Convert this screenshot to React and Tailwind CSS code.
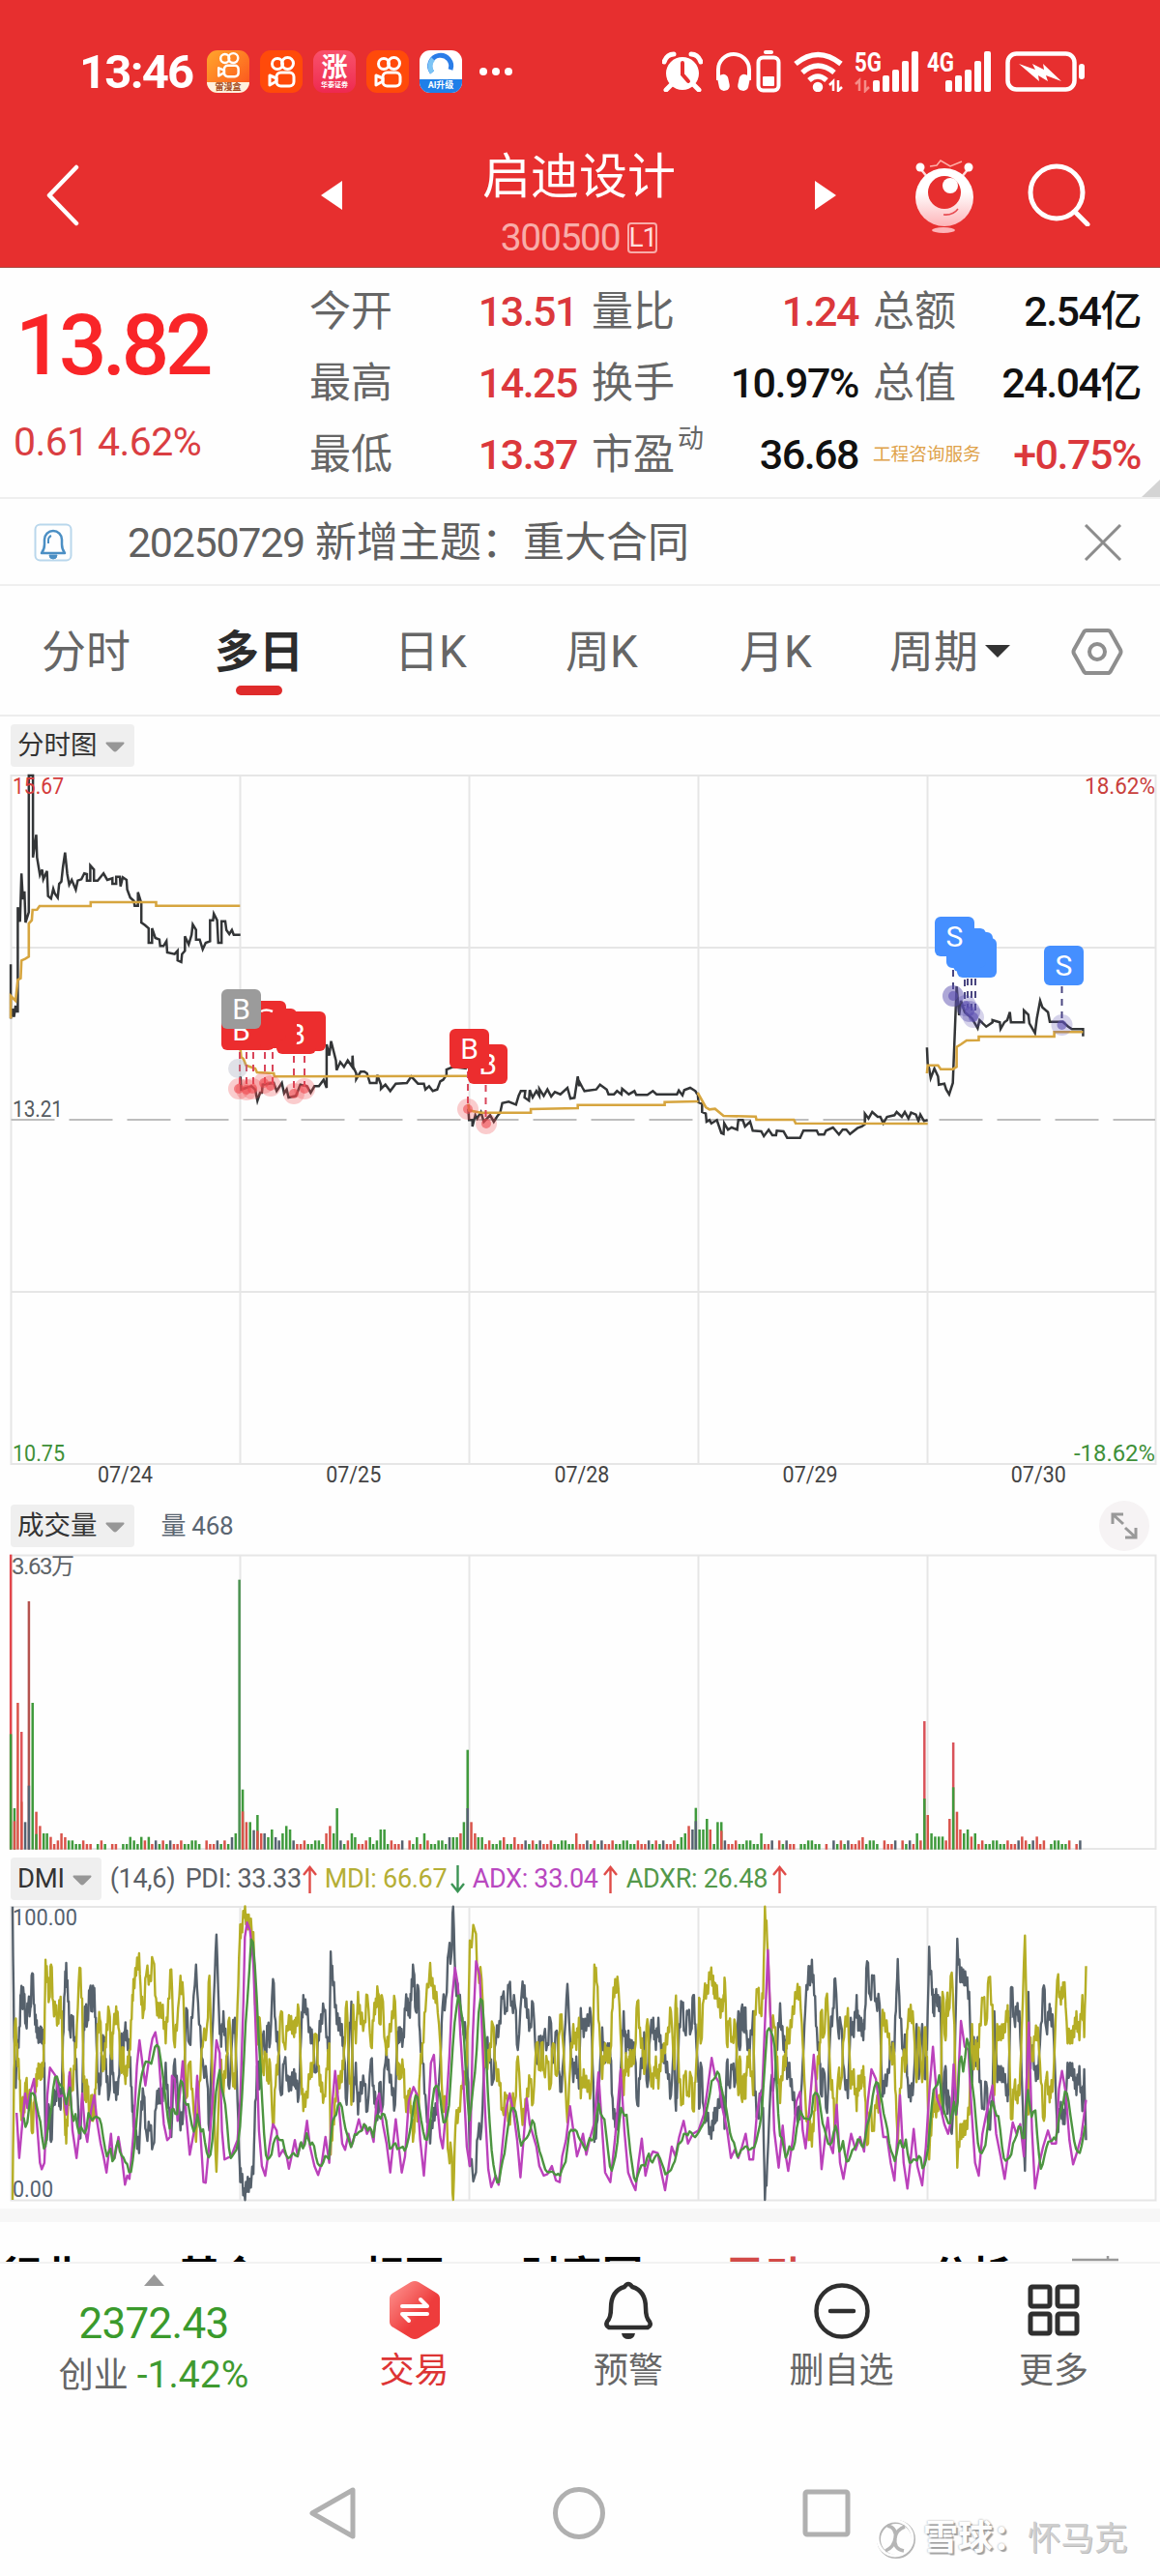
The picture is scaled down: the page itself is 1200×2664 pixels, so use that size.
const quotes = [
  { label: '今开', value: '13.51', red: true },
  { label: '量比', value: '1.24', red: true },
  { label: '总额', value: '2.54亿' },
  { label: '最高', value: '14.25', red: true },
  { label: '换手', value: '10.97%' },
  { label: '总值', value: '24.04亿' },
  { label: '最低', value: '13.37', red: true },
  { label: '市盈', sup: '动', value: '36.68' },
  { label: '工程咨询服务', tag: true, value: '+0.75%', red: true },
];

// Series points are stored in sample units: 2.6133 per px across, 3 per px down
const SX = 1 / 2.6133;
const HALF = 1568;

const parse = (text, dx = 0) =>
  text.trim().split(/\s+/).map((pair) => {
    const [x, y] = pair.split(',').map(Number);
    return [x + dx, y];
  });

const toPoints = (list, top) =>
  list.map(([x, y]) => `${(x * SX).toFixed(1)},${(top + y / 3).toFixed(1)}`).join(' ');

const priceDays = [
  parse('29,652 29,820 34,790 38,815 42,780 42,798 48,798 48,475 54,520 58,370 62,450 66,425 69,522 78,490 78,66 89,66 89,320 98,250 100,320 108,375 114,358 117,388 127,362 130,440 138,448 144,418 148,432 156,445 160,402 166,395 170,350 176,305 182,372 187,405 194,390 205,420 210,392 220,388 228,370 235,372 235,392 244,392 244,345 254,358 254,392 264,392 280,370 290,390 304,385 304,402 314,402 314,380 324,380 326,410 332,382 342,390 344,420 352,445 362,455 364,470 373,470 373,428 382,462 382,522 392,530 402,540 402,585 411,585 411,540 420,570 431,575 433,595 442,595 450,580 452,615 472,620 480,610 480,640 490,645 492,620 500,610 500,565 510,590 518,560 521,528 530,545 530,575 540,575 548,605 556,585 568,580 568,515 576,515 578,495 587,515 590,585 599,585 599,518 609,518 612,545 620,558 627,545 632,560 650,560'),
  parse('650,1000 652,1040 680,1030 690,1040 696,1075 703,1050 708,1050 710,1025 740,1020 748,1045 762,1020 768,1052 775,1040 780,1065 800,1060 812,1025 830,1030 840,1050 850,1030 862,1030 875,1010 883,1035 883,900 890,935 895,890 908,950 910,980 920,955 930,970 940,950 952,970 953,935 955,970 963,990 963,1008 975,985 985,985 992,990 1000,1020 1018,1020 1020,995 1030,1025 1030,1038 1042,1025 1055,1045 1070,1022 1100,1020 1112,1000 1130,1022 1146,1022 1150,1040 1160,1030 1170,1045 1182,1040 1190,1015 1198,1010 1207,995 1207,978 1225,970 1262,975'),
  parse('1266,1100 1268,1135 1277,1135 1277,1155 1285,1120 1290,1130 1300,1110 1308,1140 1325,1120 1335,1140 1345,1122 1352,1112 1358,1082 1375,1078 1395,1087 1402,1060 1408,1045 1420,1045 1418,1065 1430,1075 1432,1042 1440,1065 1450,1045 1458,1060 1458,1038 1470,1060 1480,1040 1490,1062 1500,1048 1515,1055 1534,1035 1542,1068 1553,1066 1562,1000 1566,1030 1568,1020 1575,1035 1580,1045 1612,1040 1622,1025 1640,1040 1645,1055 1660,1055 1668,1045 1680,1055 1682,1038 1700,1055 1715,1045 1720,1057 1750,1057 1765,1045 1775,1055 1830,1055 1835,1043 1845,1058 1850,1042 1866,1035 1880,1045 1885,1055'),
  parse('318,1050 320,1080 330,1085 330,1110 340,1115 342,1140 350,1135 355,1145 370,1135 382,1175 388,1178 390,1145 400,1165 410,1158 425,1165 428,1135 440,1135 446,1155 460,1140 467,1168 490,1170 497,1185 510,1165 520,1182 530,1182 532,1168 550,1170 560,1190 595,1190 604,1168 640,1168 645,1180 660,1180 665,1168 684,1158 700,1180 710,1165 720,1165 730,1178 750,1160 762,1155 770,1148 770,1115 780,1130 790,1110 805,1125 812,1125 820,1145 830,1125 850,1120 856,1110 870,1125 878,1110 888,1130 895,1112 908,1118 915,1138 920,1118 930,1138 940,1135', HALF),
  parse('938,910 940,960 944,975 948,1005 958,975 968,1000 970,1025 985,1022 990,1040 998,1055 1008,1020 1018,720 1025,810 1030,765 1040,800 1060,820 1075,850 1080,825 1098,845 1115,832 1115,825 1135,832 1137,852 1147,832 1155,825 1162,800 1165,832 1200,832 1200,795 1212,808 1215,835 1230,865 1235,820 1244,765 1250,785 1265,800 1270,830 1305,830 1320,845 1330,853 1360,853 1360,875', HALF),
];

const averageDays = [
  parse('29,820 29,750 42,765 48,700 56,695 58,640 68,635 78,628 78,525 86,515 88,483 100,482 107,471 245,471 245,459 422,459 422,470 649,470'),
  parse('650,915 652,940 658,945 665,965 690,975 695,987 740,990 742,1000 1265,998'),
  parse('1266,1085 1268,1105 1300,1112 1435,1112 1435,1101 1562,1098 1562,1088 1797,1088 1797,1079 1888,1077'),
  parse('318,1050 340,1095 350,1102 365,1100 388,1122 475,1124 477,1134 578,1134 583,1145 940,1146', HALF),
  parse('938,990 940,965 968,965 975,977 1008,977 1018,970 1018,908 1030,900 1045,888 1078,887 1078,876 1282,876 1282,862 1360,862', HALF),
];

const pdi = [
  ...parse('34,155 38,560 41,710 46,640 52,530 57,425 60,450 64,425 70,520 76,465 82,470 87,362 93,460 98,545 102,530 108,575 112,530 116,580 120,640 123,900 128,830 133,780 138,885 144,770 150,730 156,720 162,760 167,740 170,560 175,420 179,330 184,450 189,540 195,510 202,560 208,700 215,875 222,780 226,520 231,480 236,510 243,412 248,470 253,408 259,500 264,700 270,715 276,600 282,560 288,700 295,740 301,600 306,670 314,755 320,690 327,560 332,620 337,550 343,540 350,620 356,715 361,840 368,850 376,920 382,760 388,740 395,850 405,850 414,895 422,780 430,720 440,760 448,640 455,780 463,870 470,650 478,680 488,850 496,780 503,470 512,580 520,500 530,335 538,520 548,630 560,700 566,850 572,620 578,440 585,242 592,480 598,590 604,480 612,600 620,720 628,560 635,500 642,760 648,960 652,1010 660,1030 667,1040 675,1000 685,985 690,760 697,640 702,720 710,560 718,600 724,530 730,580 738,380 745,510 752,600 760,740 768,640 778,680 787,725 795,660 800,720 808,740 814,560 820,430 828,490 838,530 845,580 853,670 862,570 868,490 876,480 885,560 890,640 894,295 900,400 908,460 915,540 924,520 930,620 937,770 943,600 950,450 955,760 962,640 968,800 975,700 985,710 993,790 1003,630 1010,710 1016,780 1022,795 1027,700 1032,790 1042,640 1050,630 1060,740 1068,770 1073,600 1078,530 1083,570 1090,560 1096,470 1102,440 1108,500 1113,380 1118,355 1124,480 1130,400 1135,540 1142,640 1150,740 1163,890 1172,780 1180,800 1190,640 1196,470 1205,440 1213,295 1220,310 1225,155 1231,380 1240,440 1250,500 1260,560 1266,700 1270,960 1284,990 1292,870 1302,840 1310,620 1318,560 1325,640 1332,700 1340,580 1350,510 1358,440 1368,470 1376,405 1384,450 1392,460 1400,600 1410,430 1418,400 1425,500 1433,520 1441,455 1450,640 1460,560 1465,640 1470,560 1480,580 1487,500 1495,640 1505,540 1513,680 1518,730 1526,560 1534,395 1541,560 1550,700 1558,620 1565,720'),
  ...parse('2,470 10,560 20,490 30,500 36,700 39,885 45,830 52,700 60,530 68,640 75,580 82,620 88,750 95,840 104,810 112,620 118,480 124,610 131,540 136,620 140,570 148,620 155,770 162,690 170,600 175,560 182,715 190,560 198,500 205,600 212,500 220,620 230,610 238,690 246,740 255,560 258,760 262,750 268,520 276,455 283,540 292,490 300,540 306,430 312,520 320,700 323,780 326,640 335,780 343,820 352,840 360,850 364,780 370,820 380,720 388,790 392,830 397,640 402,700 412,660 420,700 428,480 432,600 437,470 442,530 446,480 450,540 458,620 468,480 472,740 480,800 488,745 495,780 500,1065 506,960 515,720 525,690 533,600 541,455 550,600 556,570 560,690 566,640 575,755 585,780 594,815 602,640 609,480 618,340 622,400 627,320 633,430 640,530 648,640 652,740 658,660 668,795 676,560 684,470 690,378 698,540 705,520 714,660 724,750 732,500 740,560 748,430 752,540 760,500 766,570 770,480 776,325 784,430 792,380 800,440 810,460 816,700 822,735 832,660 842,600 848,620 854,480 859,318 865,500 874,600 880,570 886,690 894,760 902,690 910,520 916,690 925,520 932,690 938,600 944,280 952,430 956,470 960,450 968,430 975,480 980,800 988,650 992,780 996,740 1005,860 1012,700 1020,255 1028,390 1036,350 1044,400 1052,420 1060,700 1065,560 1070,650 1075,560 1080,700 1090,780 1098,700 1105,845 1115,760 1120,480 1128,700 1138,650 1146,700 1155,720 1158,740 1163,500 1166,405 1174,500 1180,490 1188,480 1194,680 1203,975 1212,420 1216,640 1222,600 1230,650 1238,690 1246,520 1254,400 1260,530 1268,500 1272,470 1280,540 1290,835 1298,800 1304,780 1310,830 1318,640 1328,680 1336,660 1342,740 1350,650 1358,790 1363,660 1368,880', HALF),
];

// Minute ticks between the samples swing a little around the trend
const pdiTicks = [];
pdi.forEach(([x, y], i) => {
  if (i > 0) {
    const [px, py] = pdi[i - 1];
    const swing = Math.abs(y - py) < 160 ? 46 : 14;
    const up = i % 2 ? 1 : -1;
    pdiTicks.push([px + (x - px) * 0.35, py + (y - py) * 0.35 + up * swing * 0.7]);
    pdiTicks.push([px + (x - px) * 0.68, py + (y - py) * 0.68 - up * swing * 0.6]);
  }
  pdiTicks.push([x, y]);
});

const mdiTicks = pdiTicks.map(([x, y]) => [x, 1220 - y]);

const adx = [
  ...parse('45,795 52,935 60,830 68,735 74,780 80,740 92,690 100,830 108,950 113,970 120,950 128,740 135,655 150,680 160,745 172,740 180,800 188,670 196,850 207,935 214,860 222,735 230,850 236,885 246,790 255,740 262,820 272,890 280,930 288,980 300,860 305,930 310,935 320,870 330,940 338,1018 344,990 350,1000 360,870 370,650 377,570 385,640 393,710 405,610 412,565 420,545 428,600 435,720 443,830 452,880 460,870 465,680 472,690 480,820 494,635 503,800 513,925 525,850 533,680 543,880 550,1010 556,1012 565,900 575,750 585,570 594,610 600,850 607,940 615,935 625,930 635,900 642,880 650,750 658,450 662,250 668,205 676,230 685,330 692,560 700,850 708,960 717,990 728,900 738,830 748,850 755,930 765,910 775,930 781,968 790,920 797,880 805,930 812,890 820,900 830,820 838,900 850,960 860,988 870,950 880,870 890,950 898,770 906,665 915,760 925,890 933,910 942,860 950,900 960,860 970,815 978,850 985,830 992,860 1000,840 1010,885 1018,760 1025,735 1035,830 1045,890 1055,980 1062,900 1070,815 1078,900 1086,980 1095,930 1105,760 1118,715 1128,740 1136,880 1146,990 1155,850 1165,640 1173,615 1182,770 1190,870 1197,905 1205,800 1215,620 1222,440 1230,345 1238,400 1245,560 1255,740 1262,900 1270,960 1278,560 1287,325 1297,370 1305,600 1312,800 1320,970 1328,1025 1340,990 1348,1018 1358,900 1368,780 1378,735 1388,790 1398,880 1407,995 1416,870 1424,750 1432,830 1440,860 1450,900 1458,960 1470,990 1480,985 1492,960 1503,1005 1513,1010 1520,930 1530,880 1541,775 1550,850 1560,930'),
  ...parse('0,900 8,860 17,925 28,870 38,830 50,670 60,850 68,980 82,1010 95,870 110,660 120,850 130,980 140,1010 150,1035 158,950 167,875 177,990 187,940 197,915 210,920 220,980 230,1035 240,960 248,900 258,930 268,870 280,820 292,890 305,860 320,850 335,800 345,720 356,625 365,680 375,700 385,780 398,850 408,935 418,910 428,935 438,900 448,860 458,940 468,940 478,800 487,735 492,740 500,520 508,290 515,500 525,850 537,965 548,835 555,920 563,975 575,880 585,760 595,730 602,850 610,905 620,780 632,615 642,760 653,970 663,870 670,810 678,900 684,920 694,770 703,950 712,1000 722,930 733,860 745,910 757,870 768,915 778,760 788,660 800,690 810,780 820,870 830,870 840,950 850,1005 856,900 865,740 875,950 885,1030 893,950 902,845 912,960 925,1020 935,900 945,720 954,590 965,750 975,780 985,830 995,860 1003,820 1010,645 1018,800 1030,510 1040,590 1050,600 1058,780 1068,950 1078,990 1088,860 1100,790 1115,710 1125,860 1137,930 1148,1000 1160,900 1170,825 1180,860 1190,830 1200,930 1213,515 1222,850 1230,1030 1242,950 1252,900 1265,850 1275,890 1287,890 1295,720 1303,665 1313,730 1323,880 1333,955 1343,920 1355,870 1368,755', HALF),
];

const adxAt = (x) => {
  const i = adx.findIndex((p) => p[0] >= x);
  if (i <= 0) return adx[0][1];
  const [x0, y0] = adx[i - 1];
  const [x1, y1] = adx[i];
  return y0 + ((y1 - y0) * (x - x0)) / (x1 - x0);
};

// ADXR is the mean of the current ADX and the lagged one
const adxr = [];
for (let x = 64; x <= 2936; x += 5) adxr.push([x, (adxAt(x) + adxAt(x - 17)) / 2]);

const RED = '#d9534a';
const GREEN = '#3f9a3c';
const SLATE = '#566270';

// x -> [top, colour, inner top, inner colour]
const tallBars = {
  29: [383, '#e2474c', 940, GREEN], 39: [1170, GREEN, 1210, RED], 48: [843, RED], 58: [933, '#e0555a', 1150, RED], 68: [1213, SLATE],
  78: [528, '#b4524e', 1100, SLATE], 88: [843, GREEN], 98: [1181, RED, 1250, GREEN], 108: [1225, RED], 118: [1248, GREEN], 127: [1248, GREEN],
  137: [1259, RED], 166: [1248, RED], 176: [1260, RED], 352: [1259, GREEN], 382: [1259, GREEN], 402: [1259, GREEN],
  627: [1260, SLATE], 637: [1248, GREEN], 647: [461, '#4b9150'], 656: [1112, GREEN, 1180, RED], 666: [1213, RED], 676: [1213, GREEN],
  686: [1238, SLATE], 696: [1191, GREEN, 1240, RED], 706: [1248, RED], 715: [1248, SLATE], 725: [1260, GREEN], 735: [1236, GREEN], 745: [1260, SLATE],
  764: [1248, GREEN], 774: [1225, GREEN], 784: [1236, GREEN], 882: [1248, RED], 892: [1225, RED], 902: [1248, GREEN], 911: [1170, GREEN],
  951: [1248, GREEN], 960: [1260, GREEN], 1000: [1260, GREEN], 1029: [1236, GREEN], 1039: [1236, GREEN], 1127: [1260, GREEN], 1147: [1248, GREEN],
  1215: [1260, SLATE], 1225: [1260, GREEN], 1235: [1260, GREEN], 1245: [1248, RED], 1254: [1213, GREEN], 1264: [989, GREEN, 1170, SLATE],
  1274: [1213, RED], 1284: [1248, RED], 1293: [1260, GREEN], 1303: [1260, GREEN], 1362: [1260, RED], 1391: [1260, RED], 1558: [1248, RED],
  1842: [1260, GREEN], 1852: [1248, GREEN], 1862: [1225, RED], 1872: [1236, SLATE], 1881: [1169, GREEN, 1210, SLATE], 1891: [1236, GREEN],
  1901: [1236, GREEN], 1911: [1203, GREEN], 1920: [1236, RED], 1940: [1213, GREEN], 1950: [1213, GREEN, 1240, RED], 2058: [1248, GREEN],
  2332: [1260, RED], 2479: [1248, GREEN], 2499: [900, '#d9535a', 1140, GREEN], 2508: [1191, RED], 2518: [1248, GREEN], 2528: [1258, GREEN],
  2538: [1258, GREEN], 2548: [1258, GREEN], 2567: [1203, RED], 2577: [966, '#d9535a', 1105, GREEN], 2587: [1181, RED], 2596: [1236, RED],
  2606: [1248, GREEN], 2616: [1236, GREEN], 2626: [1258, RED], 2636: [1248, GREEN], 2763: [1258, RED], 2803: [1258, RED],
};

const bars = [];
const tallKeys = Object.keys(tallBars).map(Number);
const gaps = [254, 292, 323, 548, 1097, 2096, 2156, 2224, 2244, 2380, 2430, 2830, 2900];
for (let i = 0; i < 296; i++) {
  const x = 29 + i * 9.8;
  if (tallKeys.some((k) => Math.abs(k - x) < 5)) continue;
  if (gaps.some((g) => Math.abs(g - x) < 6)) continue;
  const r = (i * 7919 + i * i * 31) % 17;
  bars.push([x, r % 5 === 0 ? 1270 : 1281, [GREEN, RED, GREEN, SLATE, GREEN, RED, '#8a5a3c'][r % 7]]);
}
tallKeys.forEach((x) => {
  const [top, color, inner, innerColor] = tallBars[x];
  bars.push([x, top, color]);
  if (inner) bars.push([x, inner, innerColor]);
});

const Grid = ({ top, bottom, mid = [] }) => (
  <g stroke="#e6e6e6" strokeWidth="2" fill="none">
    <rect x="11.5" y={top} width="1184" height={bottom - top} />
    {[248.5, 485.5, 722.5, 959.5].map((x) => (
      <path key={x} d={`M${x} ${top}V${bottom}`} />
    ))}
    {mid.map((y) => (
      <path key={y} d={`M11.5 ${y}H1195.5`} />
    ))}
  </g>
);

const Flag = ({ x, y, color, children }) => (
  <g>
    <rect x={x} y={y} width="41" height="41" rx="6" fill={color} />
    <text x={x + 20.5} y={y + 31} fontSize="30" fill="#fff" textAnchor="middle">{children}</text>
  </g>
);

const PriceChart = () => (
  <svg className="block h-[746px] w-full" viewBox="0 800 1200 746">
    <Grid top={802} bottom={1514} mid={[980, 1336]} />
    <path d="M11.5 1158H1195" stroke="#bdbdbd" strokeWidth="2" strokeDasharray="45 15" />
    {priceDays.map((day, i) => (
      <polyline key={i} points={toPoints(day, 780)} fill="none" stroke="#333537" strokeWidth="2.5" />
    ))}
    {averageDays.map((day, i) => (
      <polyline key={i} points={toPoints(day, 780)} fill="none" stroke="#d6a53f" strokeWidth="2.6" />
    ))}

    {/* Buy points */}
    <g stroke="#d9455a" strokeWidth="2" strokeDasharray="7 6">
      <path d="M248 1075V1124M255 1088V1124M262 1088V1124M274 1088V1122M282 1088V1122M304 1092V1128M315 1092V1124M484 1108V1146M502.500 1122V1160" />
    </g>
    <g fill="#ef4a50">
      {[[247, 1126], [255, 1127], [261, 1126], [273, 1120], [280, 1123], [304, 1131], [315, 1126], [484, 1147], [503, 1162]].map(([x, y]) => (
        <g key={x}>
          <circle cx={x} cy={y} r="11" opacity="0.28" />
          <circle cx={x} cy={y} r="5" opacity="0.6" />
        </g>
      ))}
    </g>
    <circle cx="246" cy="1105" r="10" fill="#9aa0b4" opacity="0.3" />
    <Flag x={296} y={1046} color="#ec2d2e" />
    <Flag x={286} y={1049} color="#ec2d2e">B</Flag>
    <Flag x={266} y={1043} color="#ec2d2e" />
    <Flag x={255} y={1035} color="#ec2d2e" />
    <Flag x={243} y={1045} color="#ec2d2e" />
    <Flag x={229} y={1045} color="#ec2d2e">B</Flag>
    <path d="M270 1046q5-3 12 0" stroke="#fff" strokeWidth="2.5" fill="none" />
    <Flag x={229} y={1023} color="#9b9b9b">B</Flag>
    <Flag x={484} y={1080} color="#ec2d2e">B</Flag>
    <Flag x={465} y={1064} color="#ec2d2e">B</Flag>

    {/* Sell points */}
    <g stroke="#4a4680" strokeWidth="2" strokeDasharray="7 6">
      <path d="M986 990V1028M998 1000V1040M1001 1012V1042M1005 1012V1046M1009 1012V1048M1098.500 1020V1058" />
    </g>
    <g fill="#5b4fb0">
      {[[986, 1030, 0.5], [999, 1040, 0.3], [1003, 1046, 0.4], [1007, 1052, 0.25], [1098.5, 1060, 0.25]].map(([x, y, o]) => (
        <g key={x}>
          <circle cx={x} cy={y} r="11" opacity={o} />
          <circle cx={x} cy={y} r="5" opacity="0.6" />
        </g>
      ))}
    </g>
    <Flag x={990} y={970} color="#458fff" />
    <Flag x={986} y={964} color="#458fff" />
    <Flag x={979} y={960} color="#458fff" />
    <Flag x={967} y={948} color="#458fff">S</Flag>
    <Flag x={1080} y={978} color="#458fff">S</Flag>

    <g fontSize="23.500" fill="#555b61">
      <text x="13" y="821" fill="#d43c3c" textLength="53" lengthAdjust="spacingAndGlyphs">15.67</text>
      <text x="1122" y="821" fill="#c9403c" textLength="73" lengthAdjust="spacingAndGlyphs">18.62%</text>
      <text x="13" y="1155" textLength="52" lengthAdjust="spacingAndGlyphs">13.21</text>
      <text x="13" y="1511" fill="#3f9038" textLength="54" lengthAdjust="spacingAndGlyphs">10.75</text>
      <text x="1111" y="1511" fill="#3f9038" textLength="84" lengthAdjust="spacingAndGlyphs">-18.62%</text>
      {['07/24', '07/25', '07/28', '07/29', '07/30'].map((date, i) => (
        <text key={date} x={101 + i * 236.2} y="1533" fill="#444" textLength="57" lengthAdjust="spacingAndGlyphs">{date}</text>
      ))}
    </g>
  </svg>
);

const VolumeChart = () => (
  <svg className="block h-[310px] w-full" viewBox="0 1606 1200 310">
    <Grid top={1608.5} bottom={1912} />
    {bars.map(([x, top, color], i) => (
      <rect key={i} x={x * SX - 1.2} y={1480 + top / 3} width="2.5" height={(1298 - top) / 3} fill={color} />
    ))}
    <text x="12" y="1628" fontSize="24" fill="#606468" textLength="65">3.63万</text>
  </svg>
);

const DmiChart = () => (
  <svg className="block h-[314px] w-full" viewBox="0 1970 1200 314">
    <Grid top={1972} bottom={2275.5} />
    <g fill="none" strokeWidth="2.4" strokeLinejoin="round">
      <polyline points={toPoints(pdiTicks, 1920)} stroke="#56616c" />
      <polyline points={toPoints(mdiTicks, 1920)} stroke="#b5ae25" />
      <polyline points={toPoints(adx, 1920)} stroke="#bb41bb" />
      <polyline points={toPoints(adxr, 1920)} stroke="#4c9440" />
    </g>
    <text x="13" y="1991" fontSize="24" fill="#566270" textLength="67" lengthAdjust="spacingAndGlyphs">100.00</text>
    <text x="13" y="2272" fontSize="24" fill="#566270" textLength="42" lengthAdjust="spacingAndGlyphs">0.00</text>
  </svg>
);

const Drop = ({ className }) => (
  <svg className={className} viewBox="0 0 20 10">
    <path d="M1 0H19Q20 1 19 2L12 9Q10 11 8 9L1 2Q0 1 1 0Z" fill="currentColor" />
  </svg>
);

const Kuai = ({ className }) => (
  <svg className={className} viewBox="0 0 44 44" fill="none" stroke="#fff" strokeWidth="3">
    <circle cx="18" cy="14" r="5.500" />
    <circle cx="28.500" cy="13.500" r="6" />
    <rect x="17" y="23" width="18" height="14" rx="4.500" />
    <path d="M10 26l7 3v3l-7 4z" strokeLinejoin="round" />
  </svg>
);

const Signal = ({ label, faint }) => (
  <svg className="h-[44px] w-[66px]" viewBox="0 0 66 44">
    <text x="0" y="22" fontSize="27" fontWeight="700" fill="#fff" textLength="28" lengthAdjust="spacingAndGlyphs">{label}</text>
    {faint && <path d="M5 42V31l-4 4M11 31v11l4-4" stroke="#f58d88" strokeWidth="2.500" fill="none" />}
    <g fill="#fff">
      <rect x="19" y="31" width="7" height="12" rx="2" />
      <rect x="29" y="26" width="7" height="17" rx="2" />
      <rect x="39" y="20" width="7" height="23" rx="2" />
      <rect x="49" y="11" width="7" height="32" rx="2" />
      <rect x="59" y="1" width="7" height="42" rx="2" />
    </g>
  </svg>
);

const StatusBar = () => (
  <div className="flex h-[44px] items-center pl-[82px] text-white">
    <span className="w-[132px] text-[49px] leading-none font-bold tracking-[-1.800px]">13:46</span>
    <div className="flex gap-[11px]">
      <div className="relative h-[44px] w-[44px] overflow-hidden rounded-[11px] bg-gradient-to-br from-[#ffa52c] to-[#fa4a1c]">
        <Kuai className="absolute -top-1 left-1 h-[38px] w-[36px]" />
        <div className="absolute inset-x-0 bottom-0 h-[11px] bg-[#fff1de] text-center text-[9px] leading-[11px] font-bold text-[#a34a20]">雷漫盒</div>
      </div>
      <div className="h-[44px] w-[44px] rounded-[11px] bg-[#ff4a0a]"><Kuai className="h-[44px] w-[44px]" /></div>
      <div className="h-[44px] w-[44px] rounded-[11px] bg-gradient-to-b from-[#f9506b] to-[#ee2850] text-center font-bold">
        <div className="pt-1 text-[27px] leading-[28px]">涨</div>
        <div className="text-[7px] leading-[8px]">华泰证券</div>
      </div>
      <div className="h-[44px] w-[44px] rounded-[11px] bg-[#ff4a0a]"><Kuai className="h-[44px] w-[44px]" /></div>
      <div className="h-[44px] w-[44px] overflow-hidden rounded-[11px] bg-white">
        <svg className="h-[30px] w-[44px]" viewBox="0 0 44 30" fill="none" strokeWidth="5">
          <path d="M13 23A11 11 0 1 1 32 20" stroke="#2a7de8" />
          <path d="M13 23A11 11 0 0 1 14 9" stroke="#7cc4f5" />
        </svg>
        <div className="h-[14px] bg-[#1f7fe8] text-center text-[9px] leading-[13px] font-bold">AI升级</div>
      </div>
    </div>
    <div className="ml-[18px] flex w-[189px] gap-[5px]">
      <span className="h-2 w-2 rounded-full bg-white" />
      <span className="h-2 w-2 rounded-full bg-white" />
      <span className="h-2 w-2 rounded-full bg-white" />
    </div>
    <svg className="h-[42px] w-[42px]" viewBox="0 0 42 42">
      <circle cx="21" cy="23" r="17" fill="#fff" />
      <path d="M2 11Q5 3 12 3M40 11Q37 3 30 3" stroke="#fff" strokeWidth="5" strokeLinecap="round" fill="none" />
      <path d="M9 35l-5 5M33 35l5 5" stroke="#fff" strokeWidth="5" strokeLinecap="round" />
      <path d="M21 12v12l6 7" stroke="#e72f2f" strokeWidth="4" fill="none" strokeLinecap="round" />
    </svg>
    <svg className="ml-[13px] h-[42px] w-[38px]" viewBox="0 0 38 42">
      <path d="M3 30V19a16 16 0 0 1 32 0v11" stroke="#fff" strokeWidth="4" fill="none" />
      <rect x="3" y="24" width="11" height="17" rx="5" fill="#fff" transform="rotate(-12 8 32)" />
      <rect x="24" y="24" width="11" height="17" rx="5" fill="#fff" transform="rotate(12 30 32)" />
    </svg>
    <svg className="ml-[4px] h-[44px] w-[26px]" viewBox="0 0 26 44">
      <rect x="8" y="0" width="10" height="4" rx="2" fill="#fff" />
      <rect x="2.500" y="7.500" width="21" height="34" rx="5" stroke="#fff" strokeWidth="4" fill="none" />
      <rect x="7" y="27" width="12" height="10" rx="1" fill="#fff" />
    </svg>
    <svg className="ml-[13px] h-[42px] w-[52px]" viewBox="0 0 52 42" fill="none" stroke="#fff" strokeWidth="5.500">
      <path d="M2 13Q25-6 49 13M9 22Q25 8 42 22M16 30q9-8 18 0" />
      <circle cx="25" cy="37" r="2.500" />
      <path d="M41 41V31l-4 4M46 30v11l4-4" strokeWidth="2.500" />
    </svg>
    <div className="ml-[11px] flex gap-[9px]">
      <Signal label="5G" faint />
      <Signal label="4G" />
    </div>
    <svg className="ml-[15px] h-[42px] w-[83px]" viewBox="0 0 83 42">
      <rect x="2.500" y="2.500" width="69" height="37" rx="9" stroke="#fff" strokeWidth="4.500" fill="none" />
      <rect x="76" y="13" width="6" height="16" rx="3" fill="#fff" />
      <path d="M14 13l17 6-3-6 12 6-1-6 19 18-16-6 2 6-10-6 1 6z" fill="#fff" />
    </svg>
  </div>
);

const TitleBar = () => (
  <div className="flex h-[181px] items-center text-white">
    <svg className="mt-[30px] ml-[46px] h-[64px] w-[38px]" viewBox="0 0 38 64">
      <path d="M33 3L5 32l28 29" stroke="#fff" strokeWidth="4.500" fill="none" strokeLinecap="round" strokeLinejoin="round" />
    </svg>
    <svg className="mt-[30px] ml-[248px] h-[30px] w-[22px]" viewBox="0 0 22 30"><path d="M0 15L22 0v30z" fill="#fff" /></svg>
    <div className="ml-[141px] w-[208px] pt-[45px] text-center">
      <div className="text-[50px] leading-[66px] whitespace-nowrap">启迪设计</div>
      <div className="mt-[8px] flex items-center justify-center gap-2 text-[39px] leading-[44px] text-[#f8aca9]">
        <span className="tracking-[-1.300px]">300500</span>
        <span className="flex h-[32px] w-[31px] items-center justify-center rounded-sm border-2 border-[#f8aca9] text-[28px] leading-none tracking-[-1px] text-[#ffdedd]">L1</span>
      </div>
    </div>
    <svg className="mt-[30px] ml-[140px] h-[30px] w-[22px]" viewBox="0 0 22 30"><path d="M22 15L0 0v30z" fill="#fff" /></svg>
    <svg className="mt-[30px] ml-[81px] h-[78px] w-[62px]" viewBox="0 0 62 78">
      <defs>
        <linearGradient id="body" x1="0" y1="0" x2="0" y2="1">
          <stop offset="0.4" stopColor="#fff" />
          <stop offset="1" stopColor="#fdb4b8" />
        </linearGradient>
      </defs>
      <path d="M5 10l9 11M57 10l-9 11" stroke="#ffdcdc" strokeWidth="2.500" />
      <circle cx="6" cy="10" r="4.500" fill="#fff" />
      <circle cx="56" cy="10" r="4.500" fill="#fff" />
      <path d="M16 9l7-1 4-5 10 6 12-5" stroke="#ffb0a8" strokeWidth="1.500" fill="none" />
      <ellipse cx="31" cy="41" rx="30" ry="30" fill="url(#body)" />
      <circle cx="31" cy="36" r="17" fill="#e72f2f" />
      <circle cx="37" cy="29" r="8" fill="#fff" />
      <path d="M30 59q10 1 15-6" stroke="#e74a50" strokeWidth="1.500" fill="none" />
      <ellipse cx="30" cy="75" rx="12" ry="3" fill="#fdb4b8" />
    </svg>
    <svg className="mt-[28px] ml-[55px] h-[66px] w-[66px]" viewBox="0 0 66 66" fill="none" stroke="#fff" strokeWidth="5" strokeLinecap="round">
      <circle cx="30" cy="31" r="27" />
      <path d="M49 51l13 13" />
    </svg>
  </div>
);

const Quote = ({ label, sup, tag, value, red }) => (
  <div className="flex h-[74px] items-center justify-between">
    {tag ? (
      <span className="text-[18.600px] text-[#dfa24a]">{label}</span>
    ) : (
      <span className="relative text-[43px] text-[#666]">
        {label}
        {sup && <sup className="absolute -top-[8px] left-[89px] text-[27px] leading-none">{sup}</sup>}
      </span>
    )}
    <span className={`text-[43px] font-medium tracking-[-1.500px] ${red ? 'text-[#db383c]' : 'text-[#111]'}`}>{value}</span>
  </div>
);

const QuotePanel = () => (
  <section className="relative flex h-[239px] border-b-2 border-[#efefef] leading-none">
    <div className="w-[320px] pt-[38px] pl-[14px]">
      <div className="pl-[2px] text-[87px] leading-[84px] font-medium tracking-[-4.400px] text-[#f92528]">13.82</div>
      <div className="mt-[38px] text-[41px] leading-none tracking-[-0.600px] text-[#da3e42]">0.61 4.62%</div>
    </div>
    <div className="grid grid-cols-[277px_276px_277px] content-start gap-x-[15px] pt-[8px]">
      {quotes.map((q) => <Quote key={q.label} {...q} />)}
    </div>
    <svg className="absolute right-0 bottom-0 h-[18px] w-[19px]" viewBox="0 0 19 18"><path d="M19 0v18H0z" fill="#d4d4d4" /></svg>
  </section>
);

const Notice = () => (
  <section className="flex h-[90px] items-center border-b-2 border-[#efefef] pt-[2px] pl-[35px] text-[43px] leading-none text-[#606060]">
    <svg className="h-[40px] w-[40px]" viewBox="0 0 40 40" fill="none" stroke="#4b8fc4" strokeWidth="2.500">
      <rect x="1.500" y="1.500" width="37" height="37" rx="5" stroke="#b9d7ec" strokeWidth="2" />
      <path d="M8 31h24q-3-4-3-9v-5a9 9 0 0 0-18 0v5q0 5-3 9z" strokeLinejoin="round" />
      <path d="M15 21v-4a5 5 0 0 1 3-4" strokeWidth="2" />
      <path d="M16 33a4 4 0 0 0 8 0z" fill="#4b8fc4" strokeWidth="1" />
    </svg>
    <span className="ml-[57px] tracking-[-1.300px]">20250729</span>
    <span className="ml-[11px]">新增主题：重大合同</span>
    <svg className="ml-[408px] h-[38px] w-[40px]" viewBox="0 0 40 38"><path d="M2 1l36 36M38 1L2 37" stroke="#8c8c8c" strokeWidth="3" /></svg>
  </section>
);

const Tabs = () => (
  <nav className="flex h-[135px] items-center border-b-2 border-[#ededed] pt-[2px] pl-[43px] text-[46px] leading-none text-[#666]">
    <span className="w-[179px]">分时</span>
    <span className="relative w-[186px] font-bold text-[#2c2c2c]">
      多日
      <span className="absolute top-[58px] left-[22px] h-[10px] w-[48px] rounded-full bg-[#df2b2b]" />
    </span>
    <span className="w-[177px]">日K</span>
    <span className="w-[180px]">周K</span>
    <span className="w-[155px]">月K</span>
    <span>周期</span>
    <svg className="ml-[7px] h-[13px] w-[26px]" viewBox="0 0 26 13"><path d="M0 0h26L13 13z" fill="#333" /></svg>
    <svg className="ml-[63px] h-[50px] w-[54px]" viewBox="0 0 54 50" fill="none" stroke="#8e8e8e" strokeWidth="4">
      <path d="M16 3h22q2 0 3 2l10 18q1 2 0 4L41 45q-1 2-3 2H16q-2 0-3-2L3 27q-1-2 0-4L13 5q1-2 3-2z" />
      <circle cx="27" cy="25" r="8" />
    </svg>
  </nav>
);

const Picker = ({ children }) => (
  <span className="flex h-[44px] items-center gap-[8px] rounded-[4px] bg-[#efefef] pr-[10px] pl-[7px] text-[27.500px] leading-none text-[#333]">
    {children}
    <Drop className="mt-[3px] h-[11px] w-[20px] text-[#979797]" />
  </span>
);

const Arrow = ({ down }) => (
  <svg className="h-[29px] w-[15px]" viewBox="0 0 15 29" fill="none" stroke={down ? '#3c9455' : '#df4c48'} strokeWidth="2.400">
    {down ? <path d="M7.500 0v27M1 19l6.500 8 6.500-8" /> : <path d="M7.500 29V2M1 10L7.500 2 14 10" />}
  </svg>
);

const clipped = [
  ['行业', 'ml-[1px] w-[184px]'],
  ['基金', 'w-[191px]'],
  ['相同', 'w-[163px]'],
  ['财富圈', 'w-[211px]'],
];

const App = () => (
  <main className="flex h-[2664px] w-[1200px] flex-col overflow-hidden bg-[#fefefe] font-['Roboto','Noto_Sans_CJK_SC',sans-serif]">
    <header className="h-[277px] border-b border-[#a8483f] bg-[#e72f2f] pt-[52px]">
      <StatusBar />
      <TitleBar />
    </header>
    <QuotePanel />
    <Notice />
    <Tabs />

    {/* Charts */}
    <div className="flex h-[59px] items-center pl-[11px]"><Picker>分时图</Picker></div>
    <PriceChart />
    <div className="flex h-[60px] items-center pt-[4px] pl-[11px]">
      <Picker>成交量</Picker>
      <span className="ml-[28px] text-[26px] leading-none tracking-[-0.300px] text-[#5b6672]">量 468</span>
      <span className="ml-auto mr-[11px] flex h-[52px] w-[52px] items-center justify-center rounded-full bg-[#f6f3f4]">
        <svg className="h-[28px] w-[28px]" viewBox="0 0 28 28" fill="none" stroke="#999" strokeWidth="3">
          <path d="M2 12V2h11M2 2l11 10M26 16v10H15M26 26L15 16" />
        </svg>
      </span>
    </div>
    <VolumeChart />
    <div className="flex h-[54px] items-center pl-[11px] text-[27px] leading-none tracking-[-0.300px] whitespace-nowrap text-[#5b6066]">
      <Picker>DMI</Picker>
      <span className="ml-[9px] w-[78px]">(14,6)</span>
      <span className="w-[121px]">PDI: 33.33</span>
      <Arrow />
      <span className="ml-[8px] w-[130px] text-[#b5ae35]">MDI: 66.67</span>
      <Arrow down />
      <span className="ml-[8px] w-[135px] text-[#b848c0]">ADX: 33.04</span>
      <Arrow />
      <span className="ml-[9px] w-[151px] text-[#53984a]">ADXR: 26.48</span>
      <Arrow />
    </div>
    <DmiChart />
    <div className="h-[14px] shrink-0 bg-[#f7f7f7]" />

    {/* Section tabs, cut off by the bottom bar */}
    <div className="flex h-[43px] shrink-0 items-start overflow-hidden border-b-2 border-[#f2f2f2] pt-[36px] text-[42px] leading-none font-bold text-black">
      {clipped.map(([label, cls]) => <span key={label} className={`shrink-0 ${cls}`}>{label}</span>)}
      <span className="w-[172px] shrink-0 text-[#d24a48]">异动</span>
      <span className="w-[187px] shrink-0">AI分析</span>
      <svg className="mt-[-1px] h-[6px] w-[48px] shrink-0" viewBox="0 0 48 6"><path d="M0 4h48M37 0v5" stroke="#999" strokeWidth="2.500" /></svg>
    </div>

    <nav className="flex h-[159px] shrink-0 text-[36px] leading-none text-[#666]">
      <div className="flex w-[318px] flex-col items-center pt-[11px]">
        <svg className="h-[12px] w-[21px]" viewBox="0 0 21 12"><path d="M10.500 0L21 12H0z" fill="#999" /></svg>
        <span className="mt-[17px] text-[44px] tracking-[-0.700px] text-[#3a9a2c]">2372.43</span>
        <span className="mt-[12px] flex items-center gap-[9px]">创业 <span className="text-[39px] text-[#3f9a30]">-1.42%</span></span>
      </div>
      <div className="flex w-[221px] flex-col items-center pt-[16px] text-[#dd3434]">
        <svg className="h-[64px] w-[56px]" viewBox="0 0 56 64">
          <defs>
            <linearGradient id="trade" x1="0" y1="0" x2="1" y2="1">
              <stop offset="0" stopColor="#ff9a96" />
              <stop offset="0.6" stopColor="#ee3c3c" />
            </linearGradient>
          </defs>
          <path d="M24 3q4-2 8 0l18 11q4 2 4 6v24q0 4-4 6L32 61q-4 2-8 0L6 50q-4-2-4-6V20q0-4 4-6z" fill="url(#trade)" />
          <path d="M15 28h26l-7-7M41 36H15l7 7" stroke="#fff" strokeWidth="4" fill="none" strokeLinecap="round" strokeLinejoin="round" />
        </svg>
        <span className="mt-[13px]">交易</span>
      </div>
      <div className="flex w-[222px] flex-col items-center pt-[16px]">
        <svg className="h-[64px] w-[56px]" viewBox="0 0 56 64" fill="none" stroke="#2f2f2f" strokeWidth="4.500">
          <path d="M8 50Q4 48 6 44q4-4 4-14 0-18 14-22 4-6 8 0 14 4 14 22 0 10 4 14 2 4-2 6z" strokeLinejoin="round" />
          <path d="M21 56h14q-1 6-7 6t-7-6z" fill="#2f2f2f" stroke="none" />
        </svg>
        <span className="mt-[13px]">预警</span>
      </div>
      <div className="flex w-[219px] flex-col items-center pt-[16px]">
        <svg className="h-[64px] w-[60px]" viewBox="0 0 60 64" fill="none" stroke="#2f2f2f" strokeWidth="4.500" strokeLinecap="round">
          <circle cx="30" cy="33" r="26.500" />
          <path d="M18 33h24" />
        </svg>
        <span className="mt-[13px]">删自选</span>
      </div>
      <div className="flex w-[220px] flex-col items-center pt-[16px]">
        <svg className="h-[64px] w-[56px]" viewBox="0 0 56 64" fill="none" stroke="#2f2f2f" strokeWidth="5">
          <rect x="4" y="8" width="20" height="20" rx="2" />
          <rect x="32" y="8" width="20" height="20" rx="2" />
          <rect x="4" y="36" width="20" height="20" rx="2" />
          <rect x="32" y="36" width="20" height="20" rx="2" />
        </svg>
        <span className="mt-[13px]">更多</span>
      </div>
    </nav>

    {/* System keys and watermark */}
    <footer className="flex grow items-center pt-[34px] pl-[319px]">
      <svg className="h-[56px] w-[50px]" viewBox="0 0 50 56"><path d="M46 4v48L4 28z" fill="none" stroke="#b0b0b0" strokeWidth="5" strokeLinejoin="round" /></svg>
      <svg className="ml-[202px] h-[56px] w-[56px]" viewBox="0 0 56 56"><circle cx="28" cy="28" r="24.500" fill="none" stroke="#b0b0b0" strokeWidth="5" /></svg>
      <svg className="ml-[200px] h-[56px] w-[56px]" viewBox="0 0 56 56"><rect x="6" y="6" width="44" height="44" rx="2" fill="none" stroke="#b0b0b0" strokeWidth="5" /></svg>
      <div className="mt-[52px] ml-[22px] flex items-center text-[34.500px] leading-none whitespace-nowrap">
        <svg className="h-[42px] w-[42px]" viewBox="0 0 42 42" fill="none">
          <circle cx="22" cy="22" r="18" stroke="#b5b5b5" strokeWidth="4" />
          <circle cx="21" cy="21" r="18" stroke="#fff" strokeWidth="3" />
          <path d="M13 8q10 2 8 13t9 13M31 9q-9 3-10 12T11 34" stroke="#b5b5b5" strokeWidth="3.500" />
        </svg>
        <span className="ml-[8px] text-[36px] font-bold text-[#fdfdfd] [text-shadow:2px_2px_1px_#a0a0a0,0_0_2px_#999]">雪球：</span>
        <span className="text-[#cfcfcf] [text-shadow:1px_1px_0_#bbb]">怀马克</span>
      </div>
    </footer>
  </main>
);

export default App;
